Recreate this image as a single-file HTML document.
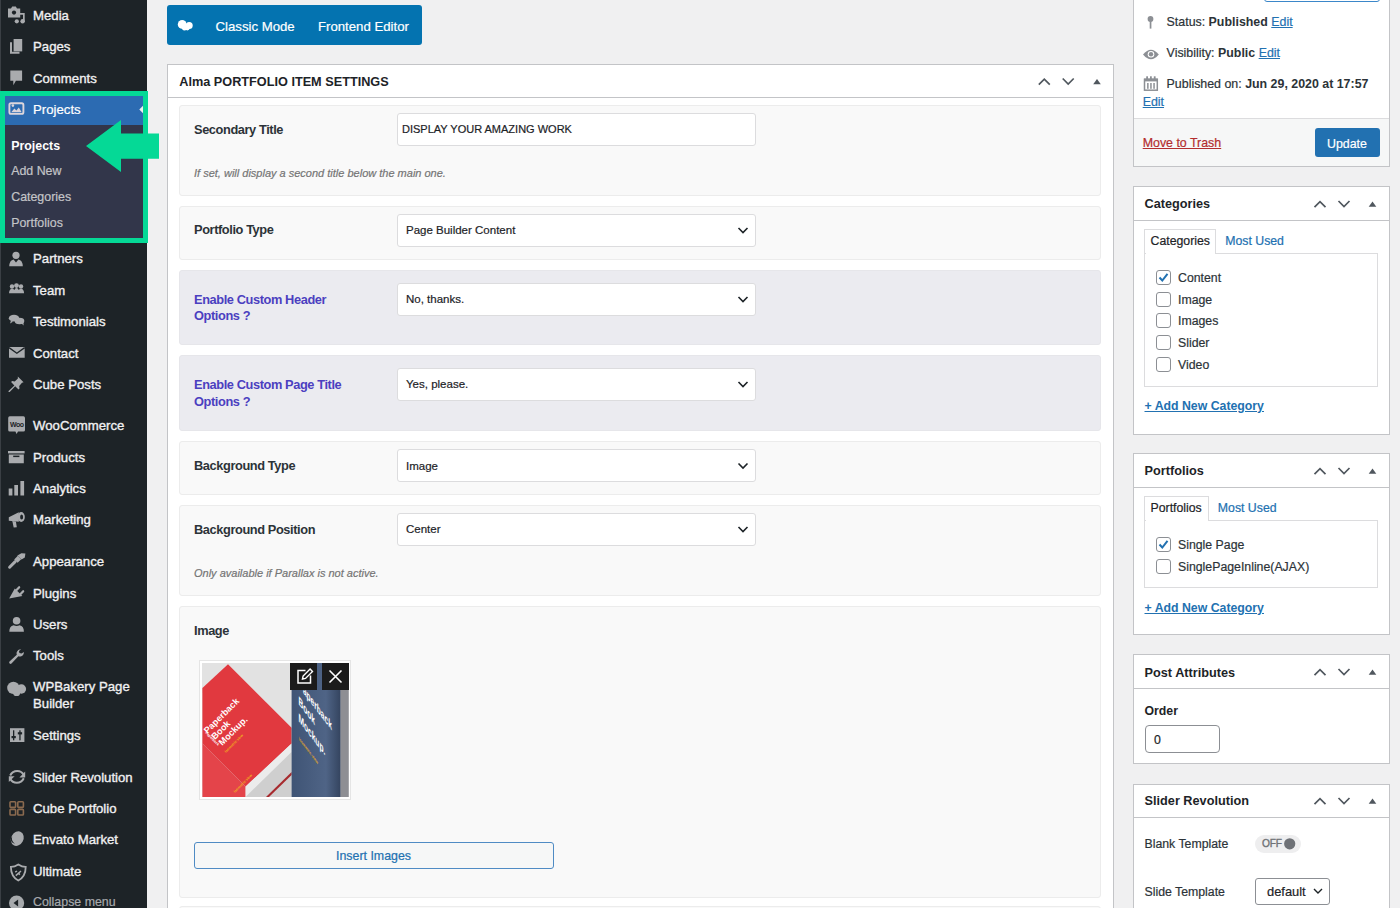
<!DOCTYPE html><html><head><meta charset="utf-8"><title>Edit Project</title><style>
html,body{margin:0;padding:0;width:1400px;height:908px;overflow:hidden;background:#f0f0f1;font-family:"Liberation Sans", sans-serif;}
.t{position:absolute;white-space:nowrap;line-height:20px;-webkit-text-stroke-width:0.2px}
.t b{-webkit-text-stroke-width:0}
.r{position:absolute;box-sizing:border-box;}
svg{position:absolute;overflow:visible}
</style></head><body>
<div class="r" style="left:0px;top:0px;width:147px;height:908px;background:#1d2327"></div>
<div class="r" style="left:0px;top:0px;width:1px;height:908px;background:#3a3f44"></div>
<div class="t" style="left:33px;top:6.33px;font-size:13.2px;font-weight:normal;color:#f0f0f1;font-style:normal;-webkit-text-stroke:0.35px #f0f0f1">Media</div>
<div class="t" style="left:33px;top:37.13px;font-size:13.2px;font-weight:normal;color:#f0f0f1;font-style:normal;-webkit-text-stroke:0.35px #f0f0f1">Pages</div>
<div class="t" style="left:33px;top:69.03px;font-size:13.2px;font-weight:normal;color:#f0f0f1;font-style:normal;-webkit-text-stroke:0.35px #f0f0f1">Comments</div>
<div class="t" style="left:33px;top:249.03px;font-size:13.2px;font-weight:normal;color:#f0f0f1;font-style:normal;-webkit-text-stroke:0.35px #f0f0f1">Partners</div>
<div class="t" style="left:33px;top:280.93px;font-size:13.2px;font-weight:normal;color:#f0f0f1;font-style:normal;-webkit-text-stroke:0.35px #f0f0f1">Team</div>
<div class="t" style="left:33px;top:311.93px;font-size:13.2px;font-weight:normal;color:#f0f0f1;font-style:normal;-webkit-text-stroke:0.35px #f0f0f1">Testimonials</div>
<div class="t" style="left:33px;top:343.73px;font-size:13.2px;font-weight:normal;color:#f0f0f1;font-style:normal;-webkit-text-stroke:0.35px #f0f0f1">Contact</div>
<div class="t" style="left:33px;top:375.23px;font-size:13.2px;font-weight:normal;color:#f0f0f1;font-style:normal;-webkit-text-stroke:0.35px #f0f0f1">Cube Posts</div>
<div class="t" style="left:33px;top:416.43px;font-size:13.2px;font-weight:normal;color:#f0f0f1;font-style:normal;-webkit-text-stroke:0.35px #f0f0f1">WooCommerce</div>
<div class="t" style="left:33px;top:447.63px;font-size:13.2px;font-weight:normal;color:#f0f0f1;font-style:normal;-webkit-text-stroke:0.35px #f0f0f1">Products</div>
<div class="t" style="left:33px;top:478.73px;font-size:13.2px;font-weight:normal;color:#f0f0f1;font-style:normal;-webkit-text-stroke:0.35px #f0f0f1">Analytics</div>
<div class="t" style="left:33px;top:510.43px;font-size:13.2px;font-weight:normal;color:#f0f0f1;font-style:normal;-webkit-text-stroke:0.35px #f0f0f1">Marketing</div>
<div class="t" style="left:33px;top:552.13px;font-size:13.2px;font-weight:normal;color:#f0f0f1;font-style:normal;-webkit-text-stroke:0.35px #f0f0f1">Appearance</div>
<div class="t" style="left:33px;top:583.53px;font-size:13.2px;font-weight:normal;color:#f0f0f1;font-style:normal;-webkit-text-stroke:0.35px #f0f0f1">Plugins</div>
<div class="t" style="left:33px;top:614.73px;font-size:13.2px;font-weight:normal;color:#f0f0f1;font-style:normal;-webkit-text-stroke:0.35px #f0f0f1">Users</div>
<div class="t" style="left:33px;top:646.43px;font-size:13.2px;font-weight:normal;color:#f0f0f1;font-style:normal;-webkit-text-stroke:0.35px #f0f0f1">Tools</div>
<div class="t" style="left:33px;top:677.43px;font-size:13.2px;font-weight:normal;color:#f0f0f1;font-style:normal;-webkit-text-stroke:0.35px #f0f0f1">WPBakery Page</div>
<div class="t" style="left:33px;top:693.93px;font-size:13.2px;font-weight:normal;color:#f0f0f1;font-style:normal;-webkit-text-stroke:0.35px #f0f0f1">Builder</div>
<div class="t" style="left:33px;top:726.13px;font-size:13.2px;font-weight:normal;color:#f0f0f1;font-style:normal;-webkit-text-stroke:0.35px #f0f0f1">Settings</div>
<div class="t" style="left:33px;top:768.13px;font-size:13.2px;font-weight:normal;color:#f0f0f1;font-style:normal;-webkit-text-stroke:0.35px #f0f0f1">Slider Revolution</div>
<div class="t" style="left:33px;top:799.33px;font-size:13.2px;font-weight:normal;color:#f0f0f1;font-style:normal;-webkit-text-stroke:0.35px #f0f0f1">Cube Portfolio</div>
<div class="t" style="left:33px;top:830.23px;font-size:13.2px;font-weight:normal;color:#f0f0f1;font-style:normal;-webkit-text-stroke:0.35px #f0f0f1">Envato Market</div>
<div class="t" style="left:33px;top:861.73px;font-size:13.2px;font-weight:normal;color:#f0f0f1;font-style:normal;-webkit-text-stroke:0.35px #f0f0f1">Ultimate</div>
<div class="t" style="left:33px;top:891.60px;font-size:12.4px;font-weight:normal;color:#a7aaad;font-style:normal;">Collapse menu</div>
<div class="r" style="left:0px;top:96px;width:147px;height:29px;background:#2c6bb2"></div>
<div class="t" style="left:33px;top:100.23px;font-size:13.2px;font-weight:normal;color:#fff;font-style:normal;">Projects</div>
<div class="r" style="left:0px;top:125px;width:147px;height:113px;background:#32364a"></div>
<div class="t" style="left:11.2px;top:135.70px;font-size:12.4px;font-weight:bold;color:#fff;font-style:normal;;-webkit-text-stroke-width:0">Projects</div>
<div class="t" style="left:11.2px;top:161.40px;font-size:12.4px;font-weight:normal;color:#c3c4c7;font-style:normal;">Add New</div>
<div class="t" style="left:11.2px;top:187.00px;font-size:12.4px;font-weight:normal;color:#c3c4c7;font-style:normal;">Categories</div>
<div class="t" style="left:11.2px;top:213.40px;font-size:12.4px;font-weight:normal;color:#c3c4c7;font-style:normal;">Portfolios</div>
<svg style="left:0;top:0" width="1" height="1"><polygon points="139.3,109.5 143,105.8 143,113.2" fill="#f0f0f1"/></svg>
<div class="r" style="left:0px;top:91px;width:148px;height:152px;border:5px solid #05d996"></div>
<svg style="left:0;top:0" width="1" height="1"><polygon points="86,146 121,120 121,133.5 159,133.5 159,158.7 121,158.7 121,172" fill="#05d996"/></svg>

<svg style="left:0;top:0" width="147" height="908" viewBox="0 0 147 908">
<g fill="#a9abae">
 <!-- media -->
 <path d="M8,8.5 h3 l1.2,-2 h3.6 l1.2,2 h3.2 v9 h-12.2 z"/>
 <circle cx="14" cy="12.6" r="2.1" fill="#1d2327"/>
 <path d="M17.5,13 h7.2 v9 h-1.7 v-7.2 h-4 z"/>
 <circle cx="16.8" cy="21.3" r="2.1"/><circle cx="22.6" cy="21.3" r="2.2"/>
 <!-- pages -->
 <path d="M10,42.3 h2 v9.5 h7.5 v2 h-9.5 z"/>
 <rect x="13.6" y="39" width="8.6" height="12.4"/>
 <!-- comments -->
 <path d="M10.3,70.4 h11.8 v10.4 h-6.2 l-2.6,4.4 v-4.4 h-3 z"/>
 <!-- partners -->
 <circle cx="16" cy="255.3" r="3.6"/>
 <path d="M9.2,266.3 q0.3,-6 4.4,-6.8 l2.4,3 l2.4,-3 q4.2,0.8 4.4,6.8 z"/>
 <!-- team -->
 <circle cx="12" cy="286.5" r="2.2"/><circle cx="16.5" cy="285.6" r="2.4"/><circle cx="21" cy="286.5" r="2.2"/>
 <path d="M9,293.3 q0.3,-4.6 3,-4.6 q1.6,0 2.3,1.2 q0.8,-1.9 2.2,-1.9 q1.5,0 2.3,1.9 q0.7,-1.2 2.3,-1.2 q2.7,0 3,4.6 z"/>
 <!-- testimonials -->
 <ellipse cx="14" cy="318.2" rx="5.2" ry="3.4"/>
 <path d="M11,320.5 l-1,3 l3,-1.8 z"/>
 <ellipse cx="19.5" cy="321" rx="4.8" ry="3.2"/>
 <path d="M21.5,323.6 l2.2,1.8 l-0.4,-2.8 z"/>
 <!-- contact -->
 <path d="M9,347 h15.7 v10.8 h-15.7 z"/>
 <path d="M9,347.6 l7.85,5.6 l7.85,-5.6" fill="none" stroke="#1d2327" stroke-width="1.3"/>
 <!-- cube posts pin -->
 <path d="M17.8,376.5 l5.8,5.8 l-1.6,0.4 l-2.8,3.2 l0.3,2.6 l-1,1 l-3.3,-3.3 l-5.5,5.8 l-1.2,0.1 l0.1,-1.2 l5.8,-5.5 l-3.3,-3.3 l1,-1 l2.6,0.3 l3.2,-2.8 z"/>
 <!-- woo -->
 <path d="M9.8,416.3 h13.6 q1.6,0 1.6,1.6 v12 q0,1.6 -1.6,1.6 h-5.4 l-1.4,2.6 l-1.2,-2.6 h-5.6 q-1.6,0 -1.6,-1.6 v-12 q0,-1.6 1.6,-1.6 z"/>
 <text x="16.8" y="426.8" font-family="Liberation Sans" font-size="7" font-weight="bold" fill="#1d2327" text-anchor="middle" letter-spacing="-0.4">Woo</text>
 <!-- products -->
 <rect x="8" y="451" width="16.6" height="2.4"/>
 <path d="M8.8,454.5 h15 v8.8 h-15 z"/>
 <rect x="13.2" y="455.6" width="6.2" height="1.5" fill="#1d2327"/>
 <!-- analytics -->
 <rect x="8.7" y="488.5" width="3.7" height="7"/><rect x="14.3" y="485" width="3.7" height="10.5"/><rect x="20.4" y="481" width="3.7" height="14.5"/>
 <!-- marketing -->
 <path d="M8.8,517.2 L18.8,512.2 L18.8,521.8 L8.8,520.8 Z"/>
 <ellipse cx="21.2" cy="517" rx="3.6" ry="4.9"/>
 <ellipse cx="21.6" cy="516.9" rx="1.5" ry="2.5" fill="#1d2327"/>
 <path d="M12.3,521 L15.9,521.5 L16.8,527.2 L13.7,527.6 Z"/>
 <!-- appearance brush -->
 <path d="M9.6,567.2 L15.2,561.6" stroke="#a9abae" stroke-width="3" stroke-linecap="round"/>
 <path d="M14.2,559.4 L17.8,555.8 L21.2,559.2 L17.6,562.8 Z"/>
 <path d="M17.4,555.6 L21.4,553.2 L25.4,553.5 L24.8,557.4 L21.6,559.6 Z"/>
 <!-- plugins -->
 <path d="M9.2,598.6 L14.8,588.4 L22.4,596 Z"/>
 <path d="M16.6,590 L19.2,587.2" stroke="#a9abae" stroke-width="2.2" stroke-linecap="round"/>
 <path d="M20.6,594 L23.2,591.2" stroke="#a9abae" stroke-width="2.2" stroke-linecap="round"/>
 <!-- users -->
 <circle cx="16.6" cy="620.8" r="3.8"/>
 <path d="M9.3,631.8 q0,-6 4.3,-6.6 q3,1.6 6,0 q4.3,0.6 4.3,6.6 z"/>
 <!-- tools wrench -->
 <path d="M21.2,649.2 q-3.6,0 -4.6,3.4 q-0.2,1 0.2,2.1 l-7.3,6.9 q-0.8,1 0.1,1.9 q0.9,0.9 1.9,0.1 l6.9,-7.3 q1.1,0.4 2.1,0.2 q3.4,-1 3.4,-4.6 l-2.4,1.7 l-2.1,-0.5 l-0.5,-2.1 z"/>
 <!-- wpbakery cloud -->
 <circle cx="13.4" cy="687.9" r="6.2"/><circle cx="21.4" cy="689" r="4.7"/><circle cx="16.6" cy="692.4" r="3.6"/>
 <!-- settings -->
 <rect x="10" y="728.2" width="14.4" height="13.8"/>
 <!-- envato leaf -->
 <ellipse cx="17.3" cy="838.6" rx="6.1" ry="7.6" transform="rotate(28 17.3 838.6)"/>
 <path d="M12.2,836.5 q-1.2,4.5 2.8,7.2 q-4.6,-0.8 -4.2,-5.2 z" fill="#1d2327"/>
</g>
<!-- settings marks -->
<g fill="#1d2327">
 <rect x="13" y="730.3" width="1.3" height="10"/><rect x="11.5" y="736" width="4.3" height="2.2"/>
 <rect x="19.3" y="730.3" width="1.3" height="10"/><rect x="17.8" y="732.2" width="4.3" height="2.2"/>
</g>
<!-- slider revolution -->
<g fill="none" stroke="#a9abae" stroke-width="2">
 <path d="M10.2,775.5 q2.2,-4.5 7,-4.5 q4.5,0 6.6,4"/>
 <path d="M23.8,778.2 q-2.2,4.5 -7,4.5 q-4.5,0 -6.6,-4"/>
</g>
<g fill="#a9abae">
 <path d="M25.2,771.6 v5.8 h-5.8 z"/><path d="M8.8,782 v-5.8 h5.8 z"/>
</g>
<!-- cube portfolio -->
<g fill="none" stroke="#8a6a4f" stroke-width="1.6">
 <rect x="10" y="801.8" width="5.6" height="5.6" rx="0.8"/><rect x="17.8" y="801.8" width="5.6" height="5.6" rx="0.8"/>
 <rect x="10" y="809.4" width="5.6" height="5.6" rx="0.8"/><rect x="17.8" y="809.4" width="5.6" height="5.6" rx="0.8"/>
</g>
<!-- ultimate shield -->
<path d="M18.3,864.5 q3.6,2.4 7.4,2.4 q0,9.5 -7.4,13.6 q-7.4,-4.1 -7.4,-13.6 q3.8,0 7.4,-2.4 z" fill="none" stroke="#a9abae" stroke-width="1.8"/>
<path d="M15.2,872.2 l1.8,-1.2 M15.8,875.6 l5.2,-4.6 M18.6,873.2 l1.2,1.6" fill="none" stroke="#a9abae" stroke-width="1.5"/>
<!-- collapse -->
<circle cx="16.6" cy="903" r="7.6" fill="#a7aaad"/>
<path d="M13.5,903 l4.6,-3.4 v6.8 z" fill="#1d2327"/>
<!-- projects icon (highlight) -->
<rect x="9.4" y="103.3" width="14" height="10.6" rx="1.6" fill="none" stroke="#dcd6dc" stroke-width="1.9"/>
<path d="M11.2,112.3 l3.2,-3.8 l2,2 l2.4,-3 l2.9,4.8 z" fill="#d9d3da"/>
<circle cx="12.9" cy="105.6" r="1.3" fill="#d9d3da"/>
</svg>

<div class="r" style="left:167px;top:5px;width:255px;height:40px;background:#0473b0;border-radius:3px"></div>
<svg style="left:0;top:0" width="1" height="1"><g fill="#fff"><circle cx="182.2" cy="24.4" r="4.4"/><circle cx="189.2" cy="25.6" r="3.5"/><circle cx="184.5" cy="27.6" r="2.8"/><circle cx="187.3" cy="28" r="2.4"/></g></svg>
<div class="t" style="left:215.5px;top:16.53px;font-size:13.2px;font-weight:normal;color:#fff;font-style:normal;">Classic Mode</div>
<div class="t" style="left:318px;top:16.53px;font-size:13.2px;font-weight:normal;color:#fff;font-style:normal;">Frontend Editor</div>
<div class="r" style="left:167px;top:64px;width:947px;height:900px;background:#fff;border:1px solid #c3c4c7"></div>
<div class="r" style="left:167px;top:97px;width:947px;height:1px;background:#c3c4c7"></div>
<div class="t" style="left:179.3px;top:71.90px;font-size:12.7px;font-weight:bold;color:#1d2327;font-style:normal;;-webkit-text-stroke-width:0">Alma PORTFOLIO ITEM SETTINGS</div>
<div class="r" style="left:179px;top:105px;width:922px;height:91px;background:#f9f9f9;border:1px solid #ececec;border-radius:3px"></div>
<div class="r" style="left:179px;top:206px;width:922px;height:54px;background:#f9f9f9;border:1px solid #ececec;border-radius:3px"></div>
<div class="r" style="left:179px;top:270px;width:922px;height:75px;background:#ebebf0;border:1px solid #e6e6ea;border-radius:3px"></div>
<div class="r" style="left:179px;top:355px;width:922px;height:76px;background:#ebebf0;border:1px solid #e6e6ea;border-radius:3px"></div>
<div class="r" style="left:179px;top:441px;width:922px;height:54px;background:#f9f9f9;border:1px solid #ececec;border-radius:3px"></div>
<div class="r" style="left:179px;top:505px;width:922px;height:91px;background:#f9f9f9;border:1px solid #ececec;border-radius:3px"></div>
<div class="r" style="left:179px;top:606px;width:922px;height:292px;background:#f9f9f9;border:1px solid #ececec;border-radius:3px"></div>
<div class="r" style="left:179px;top:906px;width:922px;height:40px;background:#f9f9f9;border:1px solid #ececec;border-radius:3px"></div>
<div class="t" style="left:194px;top:119.86px;font-size:12.8px;font-weight:bold;color:#2c3338;font-style:normal;letter-spacing:-0.4px;-webkit-text-stroke-width:0">Secondary Title</div>
<div class="t" style="left:194px;top:163.09px;font-size:11px;font-weight:normal;color:#757575;font-style:italic;">If set, will display a second title below the main one.</div>
<div class="t" style="left:194px;top:220.26px;font-size:12.8px;font-weight:bold;color:#2c3338;font-style:normal;letter-spacing:-0.4px;-webkit-text-stroke-width:0">Portfolio Type</div>
<div class="t" style="left:194px;top:290.06px;font-size:12.8px;font-weight:bold;color:#4b3fc0;font-style:normal;letter-spacing:-0.4px;-webkit-text-stroke-width:0">Enable Custom Header</div>
<div class="t" style="left:194px;top:306.46px;font-size:12.8px;font-weight:bold;color:#4b3fc0;font-style:normal;letter-spacing:-0.4px;-webkit-text-stroke-width:0">Options ?</div>
<div class="t" style="left:194px;top:375.26px;font-size:12.8px;font-weight:bold;color:#4b3fc0;font-style:normal;letter-spacing:-0.4px;-webkit-text-stroke-width:0">Enable Custom Page Title</div>
<div class="t" style="left:194px;top:391.76px;font-size:12.8px;font-weight:bold;color:#4b3fc0;font-style:normal;letter-spacing:-0.4px;-webkit-text-stroke-width:0">Options ?</div>
<div class="t" style="left:194px;top:455.76px;font-size:12.8px;font-weight:bold;color:#2c3338;font-style:normal;letter-spacing:-0.4px;-webkit-text-stroke-width:0">Background Type</div>
<div class="t" style="left:194px;top:519.76px;font-size:12.8px;font-weight:bold;color:#2c3338;font-style:normal;letter-spacing:-0.4px;-webkit-text-stroke-width:0">Background Position</div>
<div class="t" style="left:194px;top:562.69px;font-size:11px;font-weight:normal;color:#757575;font-style:italic;">Only available if Parallax is not active.</div>
<div class="t" style="left:194px;top:620.66px;font-size:12.8px;font-weight:bold;color:#2c3338;font-style:normal;letter-spacing:-0.4px;-webkit-text-stroke-width:0">Image</div>
<div class="r" style="left:397px;top:112.5px;width:359px;height:33px;background:#fff;border:1px solid #dcdcde;border-radius:3px"></div>
<div class="t" style="left:402px;top:119.49px;font-size:11.0px;font-weight:normal;color:#1d2327;font-style:normal;">DISPLAY YOUR AMAZING WORK</div>
<div class="r" style="left:397px;top:213.5px;width:359px;height:33px;background:#fff;border:1px solid #dcdcde;border-radius:3px"></div>
<div class="t" style="left:406px;top:220.32px;font-size:11.5px;font-weight:normal;color:#1d2327;font-style:normal;">Page Builder Content</div>
<svg style="left:0;top:0" width="1" height="1"><polyline points="738.5,228 743,232.5 747.5,228" fill="none" stroke="#1d2327" stroke-width="1.6"/></svg>
<div class="r" style="left:397px;top:282.5px;width:359px;height:33px;background:#fff;border:1px solid #dcdcde;border-radius:3px"></div>
<div class="t" style="left:406px;top:289.32px;font-size:11.5px;font-weight:normal;color:#1d2327;font-style:normal;">No, thanks.</div>
<svg style="left:0;top:0" width="1" height="1"><polyline points="738.5,297 743,301.5 747.5,297" fill="none" stroke="#1d2327" stroke-width="1.6"/></svg>
<div class="r" style="left:397px;top:367.5px;width:359px;height:33px;background:#fff;border:1px solid #dcdcde;border-radius:3px"></div>
<div class="t" style="left:406px;top:374.32px;font-size:11.5px;font-weight:normal;color:#1d2327;font-style:normal;">Yes, please.</div>
<svg style="left:0;top:0" width="1" height="1"><polyline points="738.5,382 743,386.5 747.5,382" fill="none" stroke="#1d2327" stroke-width="1.6"/></svg>
<div class="r" style="left:397px;top:449.0px;width:359px;height:33px;background:#fff;border:1px solid #dcdcde;border-radius:3px"></div>
<div class="t" style="left:406px;top:455.82px;font-size:11.5px;font-weight:normal;color:#1d2327;font-style:normal;">Image</div>
<svg style="left:0;top:0" width="1" height="1"><polyline points="738.5,463.5 743,468.0 747.5,463.5" fill="none" stroke="#1d2327" stroke-width="1.6"/></svg>
<div class="r" style="left:397px;top:512.5px;width:359px;height:33px;background:#fff;border:1px solid #dcdcde;border-radius:3px"></div>
<div class="t" style="left:406px;top:519.32px;font-size:11.5px;font-weight:normal;color:#1d2327;font-style:normal;">Center</div>
<svg style="left:0;top:0" width="1" height="1"><polyline points="738.5,527 743,531.5 747.5,527" fill="none" stroke="#1d2327" stroke-width="1.6"/></svg>
<div class="r" style="left:199px;top:660px;width:152px;height:140px;background:#fff;border:1px solid #e5e5e5"></div>
<div class="r" style="left:202px;top:663px;width:147px;height:134px;background:#e2e2e2"></div>
<svg style="left:0;top:0" width="1" height="1">
<defs><clipPath id="thumb"><rect x="202" y="663" width="147" height="134"/></clipPath>
<linearGradient id="spine" x1="0" x2="1" y1="0" y2="0"><stop offset="0" stop-color="#3f5475"/><stop offset="0.7" stop-color="#4f6486"/><stop offset="1" stop-color="#34445f"/></linearGradient></defs>
<g clip-path="url(#thumb)">
<rect x="202" y="663" width="147" height="134" fill="#e2e2e2"/>
<polygon points="228,664.3 291.6,727.8 291.6,743.6 245.6,786.5 202.4,743.6 202.4,688" fill="#e1393f"/>
<polygon points="202.4,743.6 245.6,786.5 245.6,797 202.4,797" fill="#e4444a"/>
<polygon points="245.6,786.5 291.6,743.6 291.6,752 245.6,797" fill="#ececec"/>
<polygon points="245.6,797 291.6,752 291.6,797" fill="#cfcfcf"/>
<polygon points="266,797 291.6,772 291.6,775 269,797" fill="#a72a2e"/>
<rect x="291.6" y="663" width="49.1" height="134" fill="url(#spine)"/>
<rect x="340.7" y="663" width="8" height="134" fill="#8e8f94"/>
<g transform="translate(207.5,734) rotate(-45)" fill="#fff" font-family="Liberation Sans" font-weight="bold" font-size="9"><text x="0" y="0">Paperback</text><text x="1" y="9.5">Book</text><text x="2" y="19">Mockup.</text></g>
<g transform="translate(226,753) rotate(-45)" fill="#f2b11c" font-size="3.6" font-family="Liberation Sans" font-weight="bold"><text>isometric view</text></g>
<g transform="translate(235,793) rotate(-45)" fill="#f2b11c" font-size="3.6" font-family="Liberation Sans" font-weight="bold"><text>isometric view</text></g>
<g transform="translate(205,733) rotate(45)" fill="#fff" font-size="3.6" font-family="Liberation Sans" font-weight="bold"><text>Paperback</text></g>
<g transform="matrix(0.55,0.72,0,1,298.5,687)" fill="#fff" font-family="Liberation Sans" font-weight="bold" font-size="12"><text x="0" y="0">Paperback</text><text x="0" y="17">Book</text><text x="0" y="34">Mockup.</text></g>
<g transform="matrix(0.55,0.72,0,1,299,740)" fill="#f2b11c" font-size="5" font-family="Liberation Sans" font-weight="bold"><text>isometric view</text></g>
</g>
<rect x="290" y="663" width="27" height="27" fill="#1b1b1b"/>
<rect x="322" y="663" width="27" height="27" fill="#1b1b1b"/>
<path d="M305.5,670.5 h-7.5 v12.5 h12.5 v-7.5" fill="none" stroke="#fff" stroke-width="1.5"/>
<path d="M302.5,679 l0.6,-3 l7,-7 l2.4,2.4 l-7,7 z" fill="none" stroke="#fff" stroke-width="1.4"/>
<path d="M329.5,670.5 l12,12 M341.5,670.5 l-12,12" stroke="#fff" stroke-width="1.6"/>
</svg>
<div class="r" style="left:194px;top:842px;width:360px;height:27px;background:#f6f7f7;border:1.5px solid #4f8bc4;border-radius:3px"></div>
<div class="t" style="left:336px;top:846.20px;font-size:12.4px;font-weight:normal;color:#2271b1;font-style:normal;">Insert Images</div>
<div class="r" style="left:1133px;top:-10px;width:257px;height:177px;background:#fff;border:1px solid #c3c4c7"></div>
<div class="r" style="left:1134px;top:118px;width:255px;height:48px;background:#f6f7f7;border-top:1px solid #dcdcde"></div>
<div class="r" style="left:1264px;top:-10px;width:116px;height:11.5px;border:1px solid #3b87c9;border-radius:3px"></div>
<svg style="left:0;top:0" width="1" height="1"><g fill="#8c8f94">
<circle cx="1150.5" cy="19" r="2.9"/><rect x="1149.7" y="20" width="1.7" height="8.6"/>
<path d="M1143,54.5 q8,-9.5 15.8,0 q-7.8,9.5 -15.8,0 z"/>
</g>
<circle cx="1151" cy="54.3" r="3.3" fill="#fff"/><circle cx="1151" cy="54.3" r="2.2" fill="#8c8f94"/>
<rect x="1144.5" y="79.3" width="12.8" height="10.9" fill="none" stroke="#8c8f94" stroke-width="1.5"/>
<g fill="#8c8f94"><rect x="1144" y="78.6" width="13.8" height="2.8"/>
<rect x="1147.1" y="83" width="1.5" height="5.8"/><rect x="1150.2" y="83" width="1.5" height="5.8"/><rect x="1153.3" y="83" width="1.5" height="5.8"/>
<rect x="1146.2" y="76.3" width="1.8" height="3"/><rect x="1150" y="76.3" width="1.8" height="3"/><rect x="1153.8" y="76.3" width="1.8" height="3"/></g>
</svg>
<div class="t" style="left:1166.6px;top:11.70px;font-size:12.4px;font-weight:normal;color:#2c3338;font-style:normal;">Status: <b>Published</b> <span style="color:#2271b1;text-decoration:underline">Edit</span></div>
<div class="t" style="left:1166.6px;top:43.20px;font-size:12.4px;font-weight:normal;color:#2c3338;font-style:normal;">Visibility: <b>Public</b> <span style="color:#2271b1;text-decoration:underline">Edit</span></div>
<div class="t" style="left:1166.6px;top:73.60px;font-size:12.4px;font-weight:normal;color:#2c3338;font-style:normal;">Published on: <b>Jun 29, 2020 at 17:57</b></div>
<div class="t" style="left:1142.7px;top:92.20px;font-size:12.4px;font-weight:normal;color:#2271b1;font-style:normal;text-decoration:underline">Edit</div>
<div class="t" style="left:1142.7px;top:132.50px;font-size:12.4px;font-weight:normal;color:#b32d2e;font-style:normal;text-decoration:underline">Move to Trash</div>
<div class="r" style="left:1315px;top:128px;width:65px;height:29px;background:#2271b1;border-radius:3px"></div>
<div class="t" style="left:1327px;top:133.70px;font-size:12.4px;font-weight:normal;color:#fff;font-style:normal;">Update</div>
<div class="r" style="left:1133px;top:186px;width:257px;height:249px;background:#fff;border:1px solid #c3c4c7"></div>
<div class="r" style="left:1133px;top:220px;width:257px;height:1px;background:#c3c4c7"></div>
<div class="t" style="left:1144.6px;top:194.10px;font-size:12.7px;font-weight:bold;color:#1d2327;font-style:normal;;-webkit-text-stroke-width:0">Categories</div>
<div class="r" style="left:1133px;top:453px;width:257px;height:182px;background:#fff;border:1px solid #c3c4c7"></div>
<div class="r" style="left:1133px;top:487px;width:257px;height:1px;background:#c3c4c7"></div>
<div class="t" style="left:1144.6px;top:461.00px;font-size:12.7px;font-weight:bold;color:#1d2327;font-style:normal;;-webkit-text-stroke-width:0">Portfolios</div>
<div class="r" style="left:1133px;top:654px;width:257px;height:110px;background:#fff;border:1px solid #c3c4c7"></div>
<div class="r" style="left:1133px;top:688px;width:257px;height:1px;background:#c3c4c7"></div>
<div class="t" style="left:1144.6px;top:662.70px;font-size:12.7px;font-weight:bold;color:#1d2327;font-style:normal;;-webkit-text-stroke-width:0">Post Attributes</div>
<div class="r" style="left:1133px;top:784px;width:257px;height:200px;background:#fff;border:1px solid #c3c4c7"></div>
<div class="r" style="left:1133px;top:817px;width:257px;height:1px;background:#c3c4c7"></div>
<div class="t" style="left:1144.6px;top:791.10px;font-size:12.7px;font-weight:bold;color:#1d2327;font-style:normal;;-webkit-text-stroke-width:0">Slider Revolution</div>
<svg style="left:0;top:0" width="1" height="1"><polyline points="1038.8,84.7 1044.3,79.2 1049.8,84.7" fill="none" stroke="#50575e" stroke-width="1.7"/><polyline points="1062.7,78.5 1068.2,84.0 1073.7,78.5" fill="none" stroke="#50575e" stroke-width="1.7"/><polygon points="1093.2,84.3 1097,78.9 1100.8,84.3" fill="#50575e"/></svg>
<svg style="left:0;top:0" width="1" height="1"><polyline points="1314.5,207.2 1320,201.7 1325.5,207.2" fill="none" stroke="#50575e" stroke-width="1.7"/><polyline points="1338.5,201 1344,206.5 1349.5,201" fill="none" stroke="#50575e" stroke-width="1.7"/><polygon points="1368.7,206.8 1372.5,201.4 1376.3,206.8" fill="#50575e"/></svg>
<svg style="left:0;top:0" width="1" height="1"><polyline points="1314.5,474.2 1320,468.7 1325.5,474.2" fill="none" stroke="#50575e" stroke-width="1.7"/><polyline points="1338.5,468 1344,473.5 1349.5,468" fill="none" stroke="#50575e" stroke-width="1.7"/><polygon points="1368.7,473.8 1372.5,468.4 1376.3,473.8" fill="#50575e"/></svg>
<svg style="left:0;top:0" width="1" height="1"><polyline points="1314.5,675.2 1320,669.7 1325.5,675.2" fill="none" stroke="#50575e" stroke-width="1.7"/><polyline points="1338.5,669 1344,674.5 1349.5,669" fill="none" stroke="#50575e" stroke-width="1.7"/><polygon points="1368.7,674.8 1372.5,669.4 1376.3,674.8" fill="#50575e"/></svg>
<svg style="left:0;top:0" width="1" height="1"><polyline points="1314.5,804.2 1320,798.7 1325.5,804.2" fill="none" stroke="#50575e" stroke-width="1.7"/><polyline points="1338.5,798 1344,803.5 1349.5,798" fill="none" stroke="#50575e" stroke-width="1.7"/><polygon points="1368.7,803.8 1372.5,798.4 1376.3,803.8" fill="#50575e"/></svg>
<div class="r" style="left:1144px;top:229px;width:72px;height:25px;background:#fff;border:1px solid #dcdcde;border-bottom:none"></div>
<div class="r" style="left:1144px;top:253px;width:234px;height:133.5px;background:#fff;border:1px solid #dcdcde"></div>
<div class="r" style="left:1145.5px;top:252px;width:69.5px;height:2px;background:#fff"></div>
<div class="t" style="left:1150.5px;top:230.84px;font-size:12.3px;font-weight:normal;color:#1d2327;font-style:normal;">Categories</div>
<div class="t" style="left:1225.2px;top:230.84px;font-size:12.3px;font-weight:normal;color:#2271b1;font-style:normal;">Most Used</div>
<div class="r" style="left:1144px;top:496px;width:64.5px;height:25px;background:#fff;border:1px solid #dcdcde;border-bottom:none"></div>
<div class="r" style="left:1144px;top:520px;width:234px;height:68px;background:#fff;border:1px solid #dcdcde"></div>
<div class="r" style="left:1145.5px;top:519px;width:62.0px;height:2px;background:#fff"></div>
<div class="t" style="left:1150.5px;top:497.74px;font-size:12.3px;font-weight:normal;color:#1d2327;font-style:normal;">Portfolios</div>
<div class="t" style="left:1217.8px;top:497.74px;font-size:12.3px;font-weight:normal;color:#2271b1;font-style:normal;">Most Used</div>
<div class="r" style="left:1156px;top:270.0px;width:15px;height:15px;background:#fff;border:1px solid #8c8f94;border-radius:3px"></div>
<svg style="left:0;top:0" width="1" height="1"><polyline points="1159.5,277.5 1162.3,280.5 1167.5,273.8" fill="none" stroke="#2271b1" stroke-width="2"/></svg>
<div class="t" style="left:1178px;top:268.04px;font-size:12.3px;font-weight:normal;color:#2c3338;font-style:normal;">Content</div>
<div class="r" style="left:1156px;top:291.7px;width:15px;height:15px;background:#fff;border:1px solid #8c8f94;border-radius:3px"></div>
<div class="t" style="left:1178px;top:289.74px;font-size:12.3px;font-weight:normal;color:#2c3338;font-style:normal;">Image</div>
<div class="r" style="left:1156px;top:313.4px;width:15px;height:15px;background:#fff;border:1px solid #8c8f94;border-radius:3px"></div>
<div class="t" style="left:1178px;top:311.44px;font-size:12.3px;font-weight:normal;color:#2c3338;font-style:normal;">Images</div>
<div class="r" style="left:1156px;top:335.1px;width:15px;height:15px;background:#fff;border:1px solid #8c8f94;border-radius:3px"></div>
<div class="t" style="left:1178px;top:333.14px;font-size:12.3px;font-weight:normal;color:#2c3338;font-style:normal;">Slider</div>
<div class="r" style="left:1156px;top:356.8px;width:15px;height:15px;background:#fff;border:1px solid #8c8f94;border-radius:3px"></div>
<div class="t" style="left:1178px;top:354.84px;font-size:12.3px;font-weight:normal;color:#2c3338;font-style:normal;">Video</div>
<div class="r" style="left:1156px;top:537.0px;width:15px;height:15px;background:#fff;border:1px solid #8c8f94;border-radius:3px"></div>
<svg style="left:0;top:0" width="1" height="1"><polyline points="1159.5,544.5 1162.3,547.5 1167.5,540.8" fill="none" stroke="#2271b1" stroke-width="2"/></svg>
<div class="t" style="left:1178px;top:535.04px;font-size:12.3px;font-weight:normal;color:#2c3338;font-style:normal;">Single Page</div>
<div class="r" style="left:1156px;top:558.6px;width:15px;height:15px;background:#fff;border:1px solid #8c8f94;border-radius:3px"></div>
<div class="t" style="left:1178px;top:556.64px;font-size:12.3px;font-weight:normal;color:#2c3338;font-style:normal;">SinglePageInline(AJAX)</div>
<div class="t" style="left:1144.5px;top:395.94px;font-size:12.3px;font-weight:bold;color:#2271b1;font-style:normal;text-decoration:underline;-webkit-text-stroke-width:0">+ Add New Category</div>
<div class="t" style="left:1144.5px;top:598.04px;font-size:12.3px;font-weight:bold;color:#2271b1;font-style:normal;text-decoration:underline;-webkit-text-stroke-width:0">+ Add New Category</div>
<div class="t" style="left:1144.5px;top:700.54px;font-size:12.3px;font-weight:bold;color:#1d2327;font-style:normal;;-webkit-text-stroke-width:0">Order</div>
<div class="r" style="left:1145px;top:725px;width:75px;height:28px;background:#fff;border:1px solid #8c8f94;border-radius:4px"></div>
<div class="t" style="left:1154px;top:730.24px;font-size:12.3px;font-weight:normal;color:#1d2327;font-style:normal;">0</div>
<div class="t" style="left:1144.5px;top:834.24px;font-size:12.3px;font-weight:normal;color:#2c3338;font-style:normal;">Blank Template</div>
<div class="r" style="left:1255px;top:835px;width:46px;height:18px;background:#eeeeef;border-radius:9px"></div>
<div class="t" style="left:1262px;top:834.47px;font-size:10.2px;font-weight:normal;color:#6f7276;font-style:normal;letter-spacing:-0.2px;-webkit-text-stroke-width:0.35px">OFF</div>
<svg style="left:0;top:0" width="1" height="1"><circle cx="1289.7" cy="843.8" r="5.6" fill="#6e7176"/></svg>
<div class="t" style="left:1144.5px;top:881.94px;font-size:12.3px;font-weight:normal;color:#2c3338;font-style:normal;">Slide Template</div>
<div class="r" style="left:1255px;top:878px;width:75px;height:27px;background:#fff;border:1px solid #8c8f94;border-radius:3px"></div>
<div class="t" style="left:1267px;top:882.03px;font-size:12.9px;font-weight:normal;color:#1d2327;font-style:normal;">default</div>
<svg style="left:0;top:0" width="1" height="1"><polyline points="1314,889 1318,893 1322,889" fill="none" stroke="#1d2327" stroke-width="1.4"/></svg>
</body></html>
